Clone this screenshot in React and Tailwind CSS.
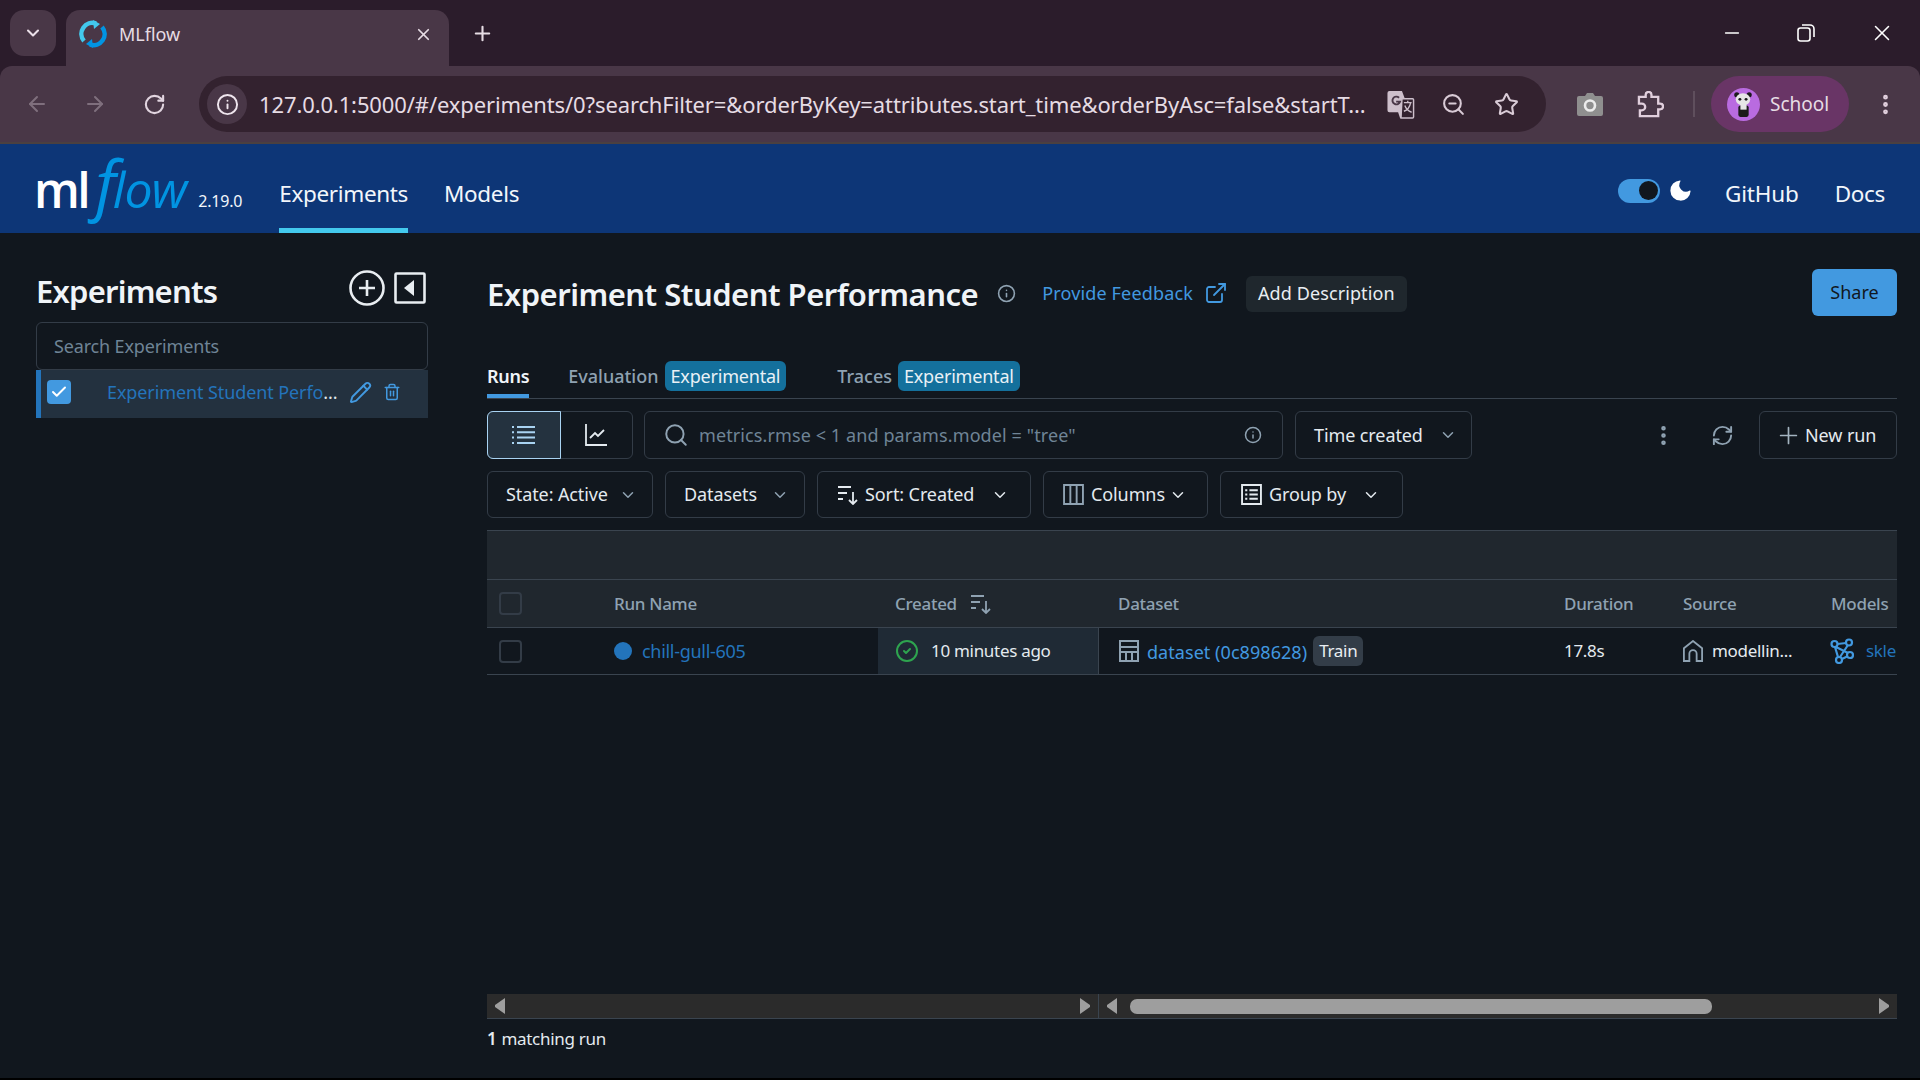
import React from 'react';
import {
  ChevronDown, X, Plus, ArrowLeft, ArrowRight, RotateCw, Info, ZoomOut, Star, Moon,
  Pencil, Trash2, Search, ExternalLink, RefreshCw, Check, CircleCheck, EllipsisVertical, Minus,
} from 'lucide-react';

const FONT = "font-['Noto_Sans',sans-serif]";
const CHROME_FONT = "font-['Noto_Sans',sans-serif]";

// table columns, shared by header and rows
const COLS = 'grid grid-cols-[127px_264px_221px_450px_119px_148px_81px]';
const OUTLINE = 'flex items-center rounded-[6px] border border-[#333c47]';

function SortIcon({ className }) {
  return (
    <svg viewBox="0 0 22 20" className={className} fill="none" stroke="currentColor" strokeWidth="1.8">
      <path d="M1 2h13M1 8h9M1 14h5M16 7v12M12 15l4 4 4-4" />
    </svg>
  );
}

function ListIcon({ className }) {
  return (
    <svg viewBox="0 0 24 20" className={className} fill="none" stroke="currentColor" strokeWidth="2">
      <path d="M5 2h18M5 7.3h18M5 12.6h18M5 18h18M0 2h2M0 7.3h2M0 12.6h2M0 18h2" />
    </svg>
  );
}

function ChartIcon({ className }) {
  return (
    <svg viewBox="0 0 22 22" className={className} fill="none" stroke="currentColor" strokeWidth="1.8">
      <path d="M1 0v21h21M5 14l5-5 3 3 6-6" />
    </svg>
  );
}

function TableIcon({ className }) {
  return (
    <svg viewBox="0 0 20 22" className={className} fill="none" stroke="currentColor" strokeWidth="2">
      <path d="M1 1h18v20H1zM1 7h18M1 12h18M7 12v9M13 12v9" />
    </svg>
  );
}

function ColumnsIcon({ className }) {
  return (
    <svg viewBox="0 0 20 20" className={className} fill="none" stroke="currentColor" strokeWidth="1.8">
      <path d="M1 1h18v18H1zM7 1v18M13 1v18" />
    </svg>
  );
}

function GroupIcon({ className }) {
  return (
    <svg viewBox="0 0 20 20" className={className} fill="none" stroke="currentColor" strokeWidth="1.8">
      <path d="M1 1h18v18H1zM4 6h2M4 10h2M4 14h2M8 6h8M8 10h8M8 14h8" />
    </svg>
  );
}

function ModelIcon({ className }) {
  return (
    <svg viewBox="0 0 24 26" className={className} fill="none" stroke="currentColor" strokeWidth="2.2">
      <circle cx="4.5" cy="6" r="3" />
      <circle cx="19" cy="4.5" r="3" />
      <circle cx="20" cy="17" r="3" />
      <circle cx="9" cy="22" r="3" />
      <path d="M7.5 6l8.5-1M6 9l12 6M18 7L10 19M17 18.5l-5 2.5M5 9l3 10" />
    </svg>
  );
}

function HouseIcon({ className }) {
  return (
    <svg viewBox="0 0 22 24" className={className} fill="none" stroke="currentColor" strokeWidth="2">
      <path d="M1 23V9l10-8 10 8v14h-6v-8a4 4 0 0 0-8 0v8z" />
    </svg>
  );
}

function Favicon() {
  return (
    <svg viewBox="0 0 28 28" className="w-[28px] h-[28px]" fill="none" strokeWidth="4.5">
      <path d="M5 21A11 11 0 0 1 17 3.5" stroke="#43c9ed" />
      <path d="M23 7a11 11 0 0 1-12 17.5" stroke="#0194e2" />
      <path d="M14 0l7 4-6 5z" fill="#43c9ed" />
      <path d="M14 28l-7-4 6-5z" fill="#0194e2" />
    </svg>
  );
}

function TranslateIcon() {
  return (
    <svg viewBox="0 0 28 30" className="w-[28px] h-[29px]">
      <path d="M2 1h13l3 8h8v20H13l-2-6H2a2 2 0 0 1-2-2V3a2 2 0 0 1 2-2z" fill="#cdbfcb" />
      <path d="M15 9h11a1 1 0 0 1 1 1v18a1 1 0 0 1-1 1H14z" fill="#33222f" stroke="#cdbfcb" strokeWidth="1.5" />
      <path d="M17 13h8M21 11v2M24 13c-1 5-4 8-7 9M18 16c1 3 4 6 7 7" stroke="#cdbfcb" strokeWidth="1.4" fill="none" />
      <path d="M12 8a4 4 0 1 0 1 4H9" stroke="#493747" strokeWidth="2" fill="none" />
    </svg>
  );
}

function PuzzleIcon() {
  return (
    <svg viewBox="0 0 28 28" className="w-[27px] h-[27px]" fill="none" stroke="#e1cfdd" strokeWidth="2.4">
      <path d="M2 6h7V4a3 3 0 0 1 6 0v2h7v7h2a3 3 0 0 1 0 6h-2v7H3v-6h2a3 3 0 0 0 0-7H2z" />
    </svg>
  );
}

function PandaAvatar() {
  return (
    <svg viewBox="0 0 32 32" className="w-[33px] h-[33px] shrink-0">
      <circle cx="16" cy="16" r="16" fill="#b96be0" />
      <circle cx="9.5" cy="6.5" r="2.5" fill="#1b1b1b" />
      <circle cx="21.5" cy="6.5" r="2.5" fill="#1b1b1b" />
      <ellipse cx="15.5" cy="11" rx="7" ry="6" fill="#e6e6e6" />
      <circle cx="12.5" cy="11" r="1.4" fill="#1b1b1b" />
      <circle cx="18.5" cy="11" r="1.4" fill="#1b1b1b" />
      <rect x="11" y="17" width="10" height="11" rx="2" fill="#1b1b1b" />
      <rect x="13" y="16" width="6" height="5" fill="#e6e6e6" />
    </svg>
  );
}

function Logo() {
  return (
    <div className="flex items-baseline leading-none select-none -mt-[14px]">
      <span className="font-['Open_Sans',sans-serif] text-[48px] font-semibold tracking-[-2.5px] text-white">ml</span>
      <span className="font-['Open_Sans',sans-serif] italic text-[#0194e2] ml-[7px]">
        <span className="text-[66px] tracking-[-3px]">f</span>
        <span className="text-[50px] tracking-[-1px]">low</span>
      </span>
    </div>
  );
}

function BrowserChrome() {
  return (
    <div className={`${CHROME_FONT} h-[144px] bg-[#2b1c2b] flex flex-col`}>
      <div className="h-[66px] flex items-end pl-[10px]">
        <div className="h-[46px] w-[46px] mb-[10px] rounded-[14px] bg-[#493747] flex items-center justify-center">
          <ChevronDown size={20} strokeWidth={2.5} className="text-[#eadfe8]" />
        </div>
        <div className="h-[56px] w-[383px] ml-[10px] rounded-t-[14px] bg-[#493747] flex items-center pl-[13px] pr-[16px] pb-[8px]">
          <Favicon />
          <span className="ml-[12px] text-[18px] text-[#e6dce4]">MLflow</span>
          <X size={19} strokeWidth={2.2} className="ml-auto text-[#e6dce4]" />
        </div>
        <Plus size={23} strokeWidth={2.2} className="ml-[22px] mb-[21px] text-[#e6dce4]" />
        <div className="ml-auto flex items-center h-full text-white">
          <Minus size={22} strokeWidth={1.6} className="mr-[54px]" />
          <svg viewBox="0 0 18 18" className="w-[18px] h-[18px] mr-[54px]" fill="none" stroke="currentColor" strokeWidth="1.6">
            <rect x="1" y="4" width="12" height="13" rx="2.5" />
            <path d="M5 1h8a4 4 0 0 1 4 4v8" />
          </svg>
          <X size={26} strokeWidth={1.4} className="mr-[25px]" />
        </div>
      </div>
      <div className="h-[78px] bg-[#493747] rounded-t-[12px] border-b-2 border-[#4a4040] flex items-center pl-[25px] pr-[17px]">
        <ArrowLeft size={24} strokeWidth={2} className="text-[#7f6f7d]" />
        <ArrowRight size={24} strokeWidth={2} className="ml-[34px] text-[#7f6f7d]" />
        <RotateCw size={23} strokeWidth={2.2} className="ml-[36px] text-[#e1d4df]" />
        <div className="ml-[33px] h-[56px] w-[1347px] rounded-full bg-[#33222f] flex items-center pl-[8px] pr-[27px]">
          <div className="w-[40px] h-[40px] rounded-full bg-[#493747] flex items-center justify-center">
            <Info size={23} strokeWidth={2} className="text-[#efe6ee]" />
          </div>
          <span className="ml-[12px] text-[22px] text-[#e6dce4] flex-1 whitespace-nowrap overflow-hidden tracking-[-0.12px]">
            127.0.0.1:5000/#/experiments/0?searchFilter=&orderByKey=attributes.start_time&orderByAsc=false&startT...
          </span>
          <div className="ml-[18px]"><TranslateIcon /></div>
          <ZoomOut size={25} strokeWidth={2} className="ml-[26px] text-[#d9cbd6]" />
          <Star size={25} strokeWidth={2} className="ml-[28px] text-[#d9cbd6]" />
        </div>
        <svg viewBox="0 0 26 24" className="ml-[31px] w-[26px] h-[24px]">
          <path d="M2 4h6l2-3h6l2 3h6a2 2 0 0 1 2 2v16a2 2 0 0 1-2 2H2a2 2 0 0 1-2-2V6a2 2 0 0 1 2-2z" fill="#8f8f8f" />
          <circle cx="13" cy="13.5" r="5" fill="none" stroke="#ececec" strokeWidth="2.6" />
        </svg>
        <div className="ml-[34px]"><PuzzleIcon /></div>
        <div className="ml-[29px] h-[26px] w-[2px] bg-[#5f4f5d]" />
        <div className="ml-[16px] h-[56px] w-[138px] rounded-full bg-[#693566] flex items-center pl-[16px]">
          <PandaAvatar />
          <span className="ml-[10px] text-[19px] text-[#e6dce4]">School</span>
        </div>
        <EllipsisVertical size={25} strokeWidth={2.6} className="ml-[24px] text-[#e1cfdd]" />
      </div>
    </div>
  );
}

function AppHeader() {
  return (
    <header className="h-[89px] bg-[#0d3677] flex items-center pl-[34px] pr-[35px] text-[#f2f6fb]">
      <Logo />
      <span className="ml-[12px] mt-[25px] text-[16px] tracking-[-0.2px]">2.19.0</span>
      <a className="ml-[37px] h-full flex items-center text-[22.5px] border-b-[5px] border-[#43c9ed] pt-[15px] tracking-[-0.35px]">Experiments</a>
      <a className="ml-[36px] mt-[10px] text-[22.5px] tracking-[-0.35px]">Models</a>
      <div className="ml-auto flex items-center">
        <div className="w-[42px] h-[24px] mt-[4px] rounded-full bg-[#4299e0] flex items-center justify-end pr-[2px]">
          <div className="w-[19px] h-[19px] rounded-full bg-[#11171e]" />
        </div>
        <Moon size={27} fill="currentColor" strokeWidth={0} className="ml-[7px] mt-[4px] text-white" />
        <a className="ml-[31px] mt-[10px] text-[22.5px] tracking-[-0.15px]">GitHub</a>
        <a className="ml-[36px] mt-[10px] text-[22.5px] tracking-[-0.35px]">Docs</a>
      </div>
    </header>
  );
}

function Sidebar() {
  return (
    <aside className="w-[487px] shrink-0 pl-[36px] pr-[59px] pt-[39px]">
      <div className="flex items-center h-[38px] mb-[12px]">
        <h2 className="text-[31px] font-semibold text-[#f0f4f8] tracking-[-0.8px] leading-none">Experiments</h2>
        <svg viewBox="0 0 36 36" className="ml-auto w-[36px] h-[36px] -mt-[7px]" fill="none" stroke="#e8edf1" strokeWidth="2.6">
          <circle cx="18" cy="18" r="16.5" />
          <path d="M18 10v16M10 18h16" />
        </svg>
        <svg viewBox="0 0 32 32" className="ml-[9px] mr-[2px] w-[32px] h-[32px] -mt-[7px]">
          <rect x="1.5" y="1.5" width="29" height="29" rx="1" fill="none" stroke="#e8edf1" strokeWidth="2.6" />
          <path d="M20 8v16L10 16z" fill="#e8edf1" />
        </svg>
      </div>
      <div className="h-[48px] rounded-[6px] border border-[#333c47] flex items-center pl-[17px] text-[18px] text-[#6f8496] tracking-[-0.15px]">
        Search Experiments
      </div>
      <div className="h-[48px] bg-[#23313f] border-l-[5px] border-[#2374bb] flex items-center pl-[6px] pb-[4px]">
        <div className="w-[24px] h-[24px] rounded-[4px] bg-[#4299e0] flex items-center justify-center shrink-0">
          <Check size={18} strokeWidth={2.6} className="text-white" />
        </div>
        <span className="ml-[36px] w-[231px] text-[18px] text-[#2374bb] whitespace-nowrap tracking-[-0.1px]">
          Experiment Student Perfo<span className="text-[#dfe6ec]">...</span>
        </span>
        <Pencil size={23} strokeWidth={2} className="ml-[11px] text-[#4299e0]" />
        <Trash2 size={18} strokeWidth={2} className="ml-[11px] text-[#4299e0]" />
      </div>
    </aside>
  );
}

function ToolButton({ className, children }) {
  return <div className={`${OUTLINE} text-[18px] text-[#e4eaef] tracking-[-0.1px] ${className}`}>{children}</div>;
}

function Tabs() {
  return (
    <div className="flex items-start h-[49px] mt-[34px] border-b border-[#3a444f] text-[18px]">
      <div className="h-[48px] pt-[9px] border-b-[4px] border-[#4299e0] font-semibold text-[#f0f4f8] flex items-center tracking-[-0.3px]">Runs</div>
      <div className="ml-[39px] h-[44px] pt-[9px] flex items-center text-[#8fa2b2] font-medium">Evaluation</div>
      <span className="ml-[6px] mt-[11px] h-[30px] px-[6px] rounded-[6px] bg-[#14709c] text-[#e9f1f6] flex items-center tracking-[-0.2px]">Experimental</span>
      <div className="ml-[51px] h-[44px] pt-[9px] flex items-center text-[#8fa2b2] font-medium">Traces</div>
      <span className="ml-[6px] mt-[11px] h-[30px] px-[6px] rounded-[6px] bg-[#14709c] text-[#e9f1f6] flex items-center tracking-[-0.2px]">Experimental</span>
    </div>
  );
}

function Toolbar() {
  return (
    <>
      <div className="flex items-center mt-[12px] h-[48px]">
        <div className="flex h-full w-[146px] rounded-[6px] border border-[#333c47]">
          <div className="-m-px w-[74px] rounded-l-[6px] border border-[#a9d3f2] bg-[#24323f] flex items-center justify-center">
            <ListIcon className="w-[24px] h-[20px] text-[#a9d3f2]" />
          </div>
          <div className="flex-1 flex items-center justify-center">
            <ChartIcon className="w-[22px] h-[22px] text-[#e4eaef]" />
          </div>
        </div>
        <div className={`${OUTLINE} ml-[11px] h-full w-[639px] pl-[18px] pr-[20px]`}>
          <Search size={26} strokeWidth={1.8} className="text-[#8fa2b2]" />
          <span className="ml-[10px] text-[18px] text-[#6f8496] tracking-[0.1px] whitespace-pre">metrics.rmse &lt; 1 and params.model = "tree"</span>
          <Info size={18} strokeWidth={2} className="ml-auto text-[#8fa2b2]" />
        </div>
        <ToolButton className="ml-[12px] h-[48px] w-[177px] pl-[18px]">
          Time created
          <ChevronDown size={18} className="ml-auto mr-[14px] text-[#8fa2b2]" />
        </ToolButton>
        <EllipsisVertical size={25} strokeWidth={2.4} className="ml-auto text-[#8fa2b2]" />
        <RefreshCw size={23} strokeWidth={2} className="ml-[35px] text-[#8fa2b2]" />
        <ToolButton className="ml-[25px] h-[48px] w-[138px] pl-[15px]">
          <Plus size={27} strokeWidth={1.5} className="text-[#a3b3c0] mr-[3px]" />
          New run
        </ToolButton>
      </div>
      <div className="flex items-center mt-[12px]">
        <ToolButton className="h-[47px] w-[166px] pl-[18px]">
          State: Active
          <ChevronDown size={18} className="ml-auto mr-[15px] text-[#8fa2b2]" />
        </ToolButton>
        <ToolButton className="h-[47px] ml-[12px] w-[140px] pl-[18px]">
          Datasets
          <ChevronDown size={18} className="ml-auto mr-[15px] text-[#8fa2b2]" />
        </ToolButton>
        <ToolButton className="h-[47px] ml-[12px] w-[214px] pl-[19px]">
          <SortIcon className="w-[22px] h-[20px] mr-[6px] text-[#e4eaef]" />
          Sort: Created
          <ChevronDown size={18} className="ml-auto mr-[21px] text-[#e4eaef]" />
        </ToolButton>
        <ToolButton className="h-[47px] ml-[12px] w-[165px] pl-[19px]">
          <ColumnsIcon className="w-[21px] h-[21px] mr-[7px] text-[#8fa2b2]" />
          Columns
          <ChevronDown size={18} className="ml-auto mr-[20px] text-[#e4eaef]" />
        </ToolButton>
        <ToolButton className="h-[47px] ml-[12px] w-[183px] pl-[20px]">
          <GroupIcon className="w-[21px] h-[21px] mr-[7px] text-[#e4eaef]" />
          Group by
          <ChevronDown size={18} className="ml-auto mr-[22px] text-[#e4eaef]" />
        </ToolButton>
      </div>
    </>
  );
}

function RunsTable() {
  return (
    <div className="mt-[12px] text-[17px] tracking-[-0.3px]">
      <div className="h-[50px] bg-[#20272e] border-t border-b border-[#3a444f]" />
      <div className={`${COLS} h-[48px] bg-[#20272e] border-b border-[#3a444f] items-center font-medium text-[#8fa2b2]`}>
        <div className="pl-[12px]"><div className="w-[23px] h-[23px] rounded-[4px] border-2 border-[#333c47]" /></div>
        <div>Run Name</div>
        <div className="pl-[17px] flex items-center">
          Created
          <SortIcon className="ml-[13px] w-[22px] h-[20px]" />
        </div>
        <div className="pl-[19px]">Dataset</div>
        <div className="pl-[15px]">Duration</div>
        <div className="pl-[15px]">Source</div>
        <div className="pl-[15px]">Models</div>
      </div>
      <div className={`${COLS} h-[47px] border-b border-[#3a444f] items-center text-[#e4eaef]`}>
        <div className="pl-[12px]"><div className="w-[23px] h-[23px] rounded-[4px] border-2 border-[#333c47]" /></div>
        <div className="flex items-center text-[18px] text-[#2374bb]">
          <div className="w-[18px] h-[18px] rounded-full bg-[#2374bb] mr-[10px]" />
          chill-gull-605
        </div>
        <div className="h-full pl-[17px] flex items-center bg-[#1f2a35] border-r border-[#3a444f]">
          <CircleCheck size={24} strokeWidth={2} className="text-[#2ea44f]" />
          <span className="ml-[12px]">10 minutes ago</span>
        </div>
        <div className="pl-[20px] flex items-center">
          <TableIcon className="w-[20px] h-[22px] text-[#8fa2b2]" />
          <span className="ml-[8px] mt-[3px] text-[18px] tracking-[0.05px] text-[#4299e0]">dataset (0c898628)</span>
          <span className="ml-[6px] h-[30px] px-[6px] rounded-[6px] bg-[#333d48] text-[#e9eef2] flex items-center">Train</span>
        </div>
        <div className="pl-[15px]">17.8s</div>
        <div className="pl-[15px] flex items-center">
          <HouseIcon className="w-[20px] h-[22px] text-[#8fa2b2]" />
          <span className="ml-[9px]">modellin...</span>
        </div>
        <div className="pl-[14px] flex items-center overflow-hidden">
          <ModelIcon className="w-[24px] h-[26px] shrink-0 text-[#4299e0]" />
          <span className="ml-[12px] text-[#2374bb]">skle</span>
        </div>
      </div>
    </div>
  );
}

function ScrollArrow({ dir }) {
  return (
    <svg viewBox="0 0 12 16" className="w-[12px] h-[16px] shrink-0" fill="#9e9e9e">
      <path d={dir === 'left' ? 'M12 0v16L2 9V7z' : 'M0 0v16l10-7V7z'} />
    </svg>
  );
}

function Scrollbars() {
  return (
    <div className="h-[25px] flex bg-[#2b2b2b] border-b border-[#3a444f]">
      <div className="w-[612px] border-r border-[#3a444f] flex items-center justify-between px-[6px]">
        <ScrollArrow dir="left" />
        <ScrollArrow dir="right" />
      </div>
      <div className="flex-1 flex items-center pl-[6px] pr-[6px]">
        <ScrollArrow dir="left" />
        <div className="ml-[13px] w-[582px] h-[15px] rounded-[7px] bg-[#9e9e9e]" />
        <div className="ml-auto"><ScrollArrow dir="right" /></div>
      </div>
    </div>
  );
}

function Main() {
  return (
    <main className="flex-1 min-w-0 pr-[23px] pt-[36px] flex flex-col">
      <div className="flex items-center h-[47px]">
        <h1 className="mt-[3px] text-[31px] font-semibold text-[#f0f4f8] tracking-[-0.5px] leading-none whitespace-nowrap">Experiment Student Performance</h1>
        <Info size={19} strokeWidth={2} className="ml-[19px] mt-[1px] text-[#8fa2b2]" />
        <a className="ml-[26px] mt-[2px] text-[18px] text-[#4299e0] tracking-[0.15px]">Provide Feedback</a>
        <ExternalLink size={24} strokeWidth={1.8} className="ml-[11px] text-[#4299e0]" />
        <div className="ml-[18px] mt-[2px] h-[36px] px-[12px] rounded-[6px] bg-[#1f272d] text-[18px] text-[#e9eef2] flex items-center tracking-[0.1px]">Add Description</div>
        <div className="ml-auto h-[47px] w-[85px] rounded-[6px] bg-[#4299e0] text-[18px] text-[#11171e] flex items-center justify-center">Share</div>
      </div>
      <Tabs />
      <Toolbar />
      <RunsTable />
      <div className="flex-1" />
      <Scrollbars />
      <div className="h-[40px] flex items-center text-[17px] text-[#e4eaef] tracking-[-0.3px]">
        <span className="font-semibold">1</span>
        <span className="ml-[5px]">matching run</span>
      </div>
      <div className="h-[19px]" />
    </main>
  );
}

export default function App() {
  return (
    <div className={`${FONT} w-[1920px] h-[1080px] overflow-hidden flex flex-col bg-[#11171e]`}>
      <BrowserChrome />
      <AppHeader />
      <div className="flex-1 flex min-h-0">
        <Sidebar />
        <Main />
      </div>
      <div className="h-[2px] bg-black" />
    </div>
  );
}
